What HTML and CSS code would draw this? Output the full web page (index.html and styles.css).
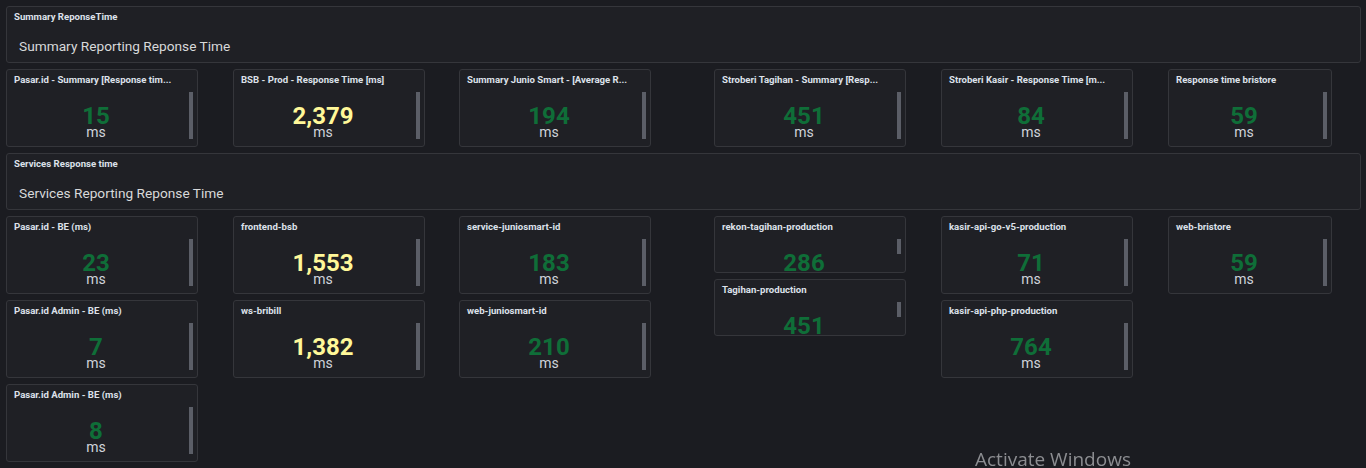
FILE: index.html
```html
<!DOCTYPE html>
<html lang="en">
<head>
<meta charset="utf-8">
<title>Response Time Dashboard</title>
<link rel="stylesheet" href="styles.css">
</head>
<body>
<div class="dash">
  <section class="panel text-panel">
    <div class="p-title">Summary ReponseTime</div>
    <div class="text-body">Summary Reporting Reponse Time</div>
  </section>

  <div class="row">
    <div class="panel stat c1">
      <div class="p-title">Pasar.id - Summary [Response tim...</div>
      <div class="stat-body"><div class="content"><div class="val green">15</div><div class="unit">ms</div></div><div class="bar"></div></div>
    </div>
    <div class="panel stat c2">
      <div class="p-title">BSB - Prod - Response Time [ms]</div>
      <div class="stat-body"><div class="content"><div class="val yellow">2,379</div><div class="unit">ms</div></div><div class="bar"></div></div>
    </div>
    <div class="panel stat c3">
      <div class="p-title">Summary Junio Smart - [Average R...</div>
      <div class="stat-body"><div class="content"><div class="val green">194</div><div class="unit">ms</div></div><div class="bar"></div></div>
    </div>
    <div class="panel stat c4">
      <div class="p-title">Stroberi Tagihan - Summary [Resp...</div>
      <div class="stat-body"><div class="content"><div class="val green">451</div><div class="unit">ms</div></div><div class="bar"></div></div>
    </div>
    <div class="panel stat c5">
      <div class="p-title">Stroberi Kasir - Response Time [m...</div>
      <div class="stat-body"><div class="content"><div class="val green">84</div><div class="unit">ms</div></div><div class="bar"></div></div>
    </div>
    <div class="panel stat c6">
      <div class="p-title">Response time bristore</div>
      <div class="stat-body"><div class="content"><div class="val green">59</div><div class="unit">ms</div></div><div class="bar"></div></div>
    </div>
  </div>

  <section class="panel text-panel">
    <div class="p-title">Services Response time</div>
    <div class="text-body">Services Reporting Reponse Time</div>
  </section>

  <div class="row services">
    <div class="panel stat c1 r1">
      <div class="p-title">Pasar.id - BE (ms)</div>
      <div class="stat-body"><div class="content"><div class="val green">23</div><div class="unit">ms</div></div><div class="bar"></div></div>
    </div>
    <div class="panel stat c1 r2">
      <div class="p-title">Pasar.id Admin - BE (ms)</div>
      <div class="stat-body"><div class="content"><div class="val green">7</div><div class="unit">ms</div></div><div class="bar"></div></div>
    </div>
    <div class="panel stat c1 r3">
      <div class="p-title">Pasar.id Admin - BE (ms)</div>
      <div class="stat-body"><div class="content"><div class="val green">8</div><div class="unit">ms</div></div><div class="bar"></div></div>
    </div>

    <div class="panel stat c2 r1">
      <div class="p-title">frontend-bsb</div>
      <div class="stat-body"><div class="content"><div class="val yellow">1,553</div><div class="unit">ms</div></div><div class="bar"></div></div>
    </div>
    <div class="panel stat c2 r2">
      <div class="p-title">ws-bribill</div>
      <div class="stat-body"><div class="content"><div class="val yellow">1,382</div><div class="unit">ms</div></div><div class="bar"></div></div>
    </div>

    <div class="panel stat c3 r1">
      <div class="p-title">service-juniosmart-id</div>
      <div class="stat-body"><div class="content"><div class="val green">183</div><div class="unit">ms</div></div><div class="bar"></div></div>
    </div>
    <div class="panel stat c3 r2">
      <div class="p-title">web-juniosmart-id</div>
      <div class="stat-body"><div class="content"><div class="val green">210</div><div class="unit">ms</div></div><div class="bar"></div></div>
    </div>

    <div class="stack c4 r12">
      <div class="panel stat small">
        <div class="p-title">rekon-tagihan-production</div>
        <div class="stat-body"><div class="content"><div class="val green">286</div><div class="unit">ms</div></div><div class="bar"></div></div>
      </div>
      <div class="panel stat small">
        <div class="p-title">Tagihan-production</div>
        <div class="stat-body"><div class="content"><div class="val green">451</div><div class="unit">ms</div></div><div class="bar"></div></div>
      </div>
    </div>

    <div class="panel stat c5 r1">
      <div class="p-title">kasir-api-go-v5-production</div>
      <div class="stat-body"><div class="content"><div class="val green">71</div><div class="unit">ms</div></div><div class="bar"></div></div>
    </div>
    <div class="panel stat c5 r2">
      <div class="p-title">kasir-api-php-production</div>
      <div class="stat-body"><div class="content"><div class="val green">764</div><div class="unit">ms</div></div><div class="bar"></div></div>
    </div>

    <div class="panel stat c6 r1">
      <div class="p-title">web-bristore</div>
      <div class="stat-body"><div class="content"><div class="val green">59</div><div class="unit">ms</div></div><div class="bar"></div></div>
    </div>
  </div>
</div>
<div class="watermark">Activate Windows</div>
</body>
</html>
```
FILE: styles.css
```css
html, body {
  margin: 0;
  padding: 0;
  background: #1b1c21;
  height: 100%;
  overflow: hidden;
}

body {
  font-family: Roboto, Inter, "Noto Sans", "Liberation Sans", sans-serif;
  color: #d8d9da;
}

.dash {
  display: flex;
  flex-direction: column;
  gap: 6px;
  padding: 6px 0 0 6px;
}

.panel {
  box-sizing: border-box;
  background: #1f2025;
  border: 1px solid #35363b;
  border-radius: 3px;
  overflow: hidden;
  display: flex;
  flex-direction: column;
}

.p-title {
  flex: 0 0 19px;
  height: 19px;
  line-height: 20px;
  padding: 0 7px;
  font-size: 9.6px;
  font-weight: 700;
  color: #dde1ea;
  white-space: nowrap;
  overflow: hidden;
}

.text-panel {
  width: 1355px;
  height: 57px;
}

.text-body {
  padding: 10px 12px 0 12px;
  font-size: 13.7px;
  line-height: 20px;
  color: #d8d9da;
}

.row {
  display: grid;
  grid-template-columns: 192px 35px 192px 34px 192px 63px 192px 35px 192px 35px 164px;
  grid-template-rows: 78px;
}

.services {
  grid-template-rows: 78px 78px 78px;
  row-gap: 6px;
}

.c1 { grid-column: 1; }
.c2 { grid-column: 3; }
.c3 { grid-column: 5; }
.c4 { grid-column: 7; }
.c5 { grid-column: 9; }
.c6 { grid-column: 11; }
.r1 { grid-row: 1; }
.r2 { grid-row: 2; }
.r3 { grid-row: 3; }
.r12 { grid-row: 1 / span 2; }

.stat {
  height: 78px;
}

.stack {
  display: flex;
  flex-direction: column;
  gap: 6px;
}

.stat.small {
  height: 57px;
}

.stat-body {
  flex: 1;
  min-height: 0;
  display: flex;
  align-items: flex-start;
  padding: 3px 4px 0 7px;
}

.content {
  flex: 1;
  flex-shrink: 0;
  box-sizing: border-box;
  height: 47px;
  padding-bottom: 1px;
  display: flex;
  flex-direction: column;
  justify-content: flex-end;
  align-items: center;
}

.val {
  font-size: 24px;
  font-weight: 700;
  line-height: 19px;
}

.unit {
  font-size: 14px;
  line-height: 12px;
  color: #d0d3da;
}

.green { color: #0f6e38; }
.yellow { color: #fff899; }

.bar {
  flex: 0 0 4px;
  width: 4px;
  height: 47px;
  margin-left: 11px;
  background: #5b5e67;
}

.small .bar {
  height: 15px;
}

.watermark {
  position: fixed;
  left: 975px;
  top: 446px;
  font-family: "Open Sans", "Noto Sans", sans-serif;
  font-size: 19px;
  color: #8c8d91;
  white-space: nowrap;
}
```
